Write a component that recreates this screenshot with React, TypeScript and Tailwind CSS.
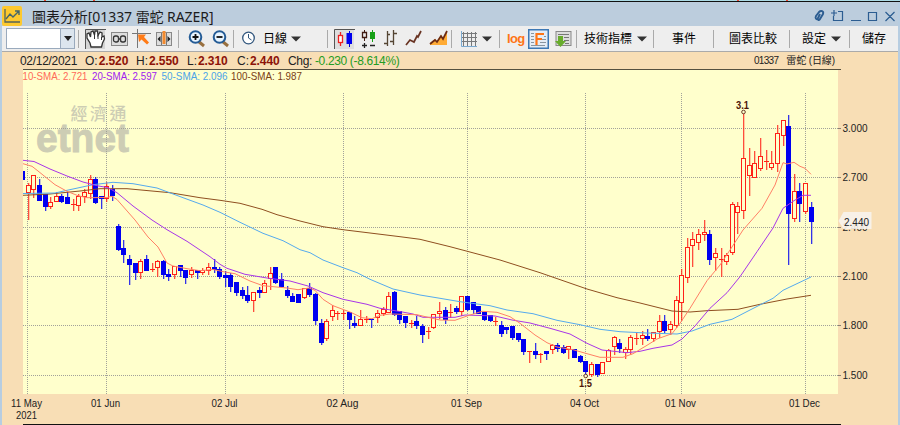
import { ReactNode } from "react";

type Candle = [
	up: 0 | 1,
	high: number,
	bodyTop: number,
	bodyBottom: number,
	low: number
];

const FIRST_X = 28;
const STEP = 5.634;

// one entry per trading day, starting 11 May
const candles: Candle[] = [
	[1, 183, 185, 192, 219],
	[1, 175, 175, 189, 197],
	[0, 179, 185, 200, 200],
	[0, 194, 194, 206, 210],
	[1, 197, 202, 206, 208],
	[1, 192, 196, 201, 201],
	[0, 194, 196, 201, 202],
	[0, 192, 197, 203, 203],
	[1, 199, 204, 204, 210],
	[1, 194, 196, 205, 210],
	[1, 189, 192, 196, 202],
	[1, 175, 179, 193, 198],
	[0, 177, 179, 202, 203],
	[0, 196, 196, 198, 208],
	[1, 182, 186, 198, 201],
	[0, 185, 189, 195, 200],
	[0, 224, 226, 249, 250],
	[0, 240, 248, 254, 262],
	[0, 255, 259, 264, 284],
	[0, 263, 263, 272, 279],
	[1, 259, 261, 272, 278],
	[0, 255, 259, 270, 270],
	[1, 263, 269, 269, 271],
	[1, 260, 261, 267, 276],
	[0, 260, 261, 274, 278],
	[0, 269, 274, 276, 280],
	[1, 266, 266, 274, 278],
	[0, 265, 265, 270, 276],
	[0, 270, 270, 277, 283],
	[1, 267, 270, 274, 277],
	[0, 270, 270, 272, 278],
	[1, 268, 270, 272, 274],
	[1, 263, 267, 270, 274],
	[0, 259, 267, 269, 272],
	[0, 267, 269, 276, 278],
	[0, 271, 275, 277, 286],
	[0, 273, 275, 286, 291],
	[0, 282, 282, 292, 295],
	[0, 287, 290, 295, 298],
	[0, 286, 295, 300, 302],
	[1, 292, 292, 300, 311],
	[0, 287, 290, 292, 297],
	[1, 280, 283, 292, 292],
	[1, 267, 273, 278, 289],
	[0, 267, 267, 282, 283],
	[0, 273, 279, 286, 286],
	[0, 286, 290, 295, 297],
	[0, 293, 296, 301, 301],
	[0, 294, 294, 302, 302],
	[1, 288, 288, 297, 298],
	[0, 283, 288, 294, 296],
	[0, 293, 294, 320, 324],
	[0, 319, 323, 342, 344],
	[1, 319, 321, 338, 340],
	[1, 305, 310, 316, 320],
	[1, 311, 313, 313, 319],
	[1, 310, 313, 313, 319],
	[0, 312, 312, 319, 328],
	[0, 316, 323, 325, 327],
	[1, 310, 319, 325, 325],
	[1, 316, 319, 319, 322],
	[0, 319, 319, 319, 327],
	[1, 310, 313, 317, 322],
	[1, 307, 309, 313, 315],
	[1, 292, 296, 312, 312],
	[0, 291, 292, 314, 315],
	[0, 311, 311, 319, 323],
	[0, 316, 316, 322, 327],
	[1, 320, 323, 323, 327],
	[0, 316, 321, 325, 328],
	[0, 324, 326, 334, 342],
	[1, 327, 331, 331, 338],
	[1, 314, 314, 327, 328],
	[1, 302, 311, 313, 318],
	[0, 307, 310, 319, 323],
	[1, 304, 312, 312, 317],
	[0, 306, 308, 311, 313],
	[1, 296, 296, 311, 315],
	[0, 296, 296, 309, 310],
	[0, 302, 302, 309, 313],
	[0, 306, 306, 313, 313],
	[0, 312, 312, 319, 320],
	[0, 315, 315, 320, 321],
	[1, 317, 321, 321, 325],
	[0, 321, 325, 333, 336],
	[0, 327, 327, 329, 333],
	[0, 326, 326, 337, 339],
	[0, 333, 333, 339, 341],
	[0, 339, 339, 351, 354],
	[1, 351, 351, 351, 362],
	[0, 343, 351, 354, 358],
	[1, 353, 354, 354, 362],
	[0, 351, 351, 353, 359],
	[1, 344, 345, 349, 353],
	[0, 343, 345, 348, 351],
	[0, 345, 347, 352, 353],
	[1, 346, 346, 349, 358],
	[0, 349, 349, 357, 357],
	[0, 355, 356, 361, 362],
	[0, 361, 361, 371, 376],
	[1, 362, 364, 374, 376],
	[0, 364, 364, 374, 376],
	[1, 362, 362, 373, 373],
	[1, 349, 350, 361, 361],
	[1, 336, 337, 346, 354],
	[0, 339, 343, 348, 352],
	[1, 347, 349, 352, 358],
	[1, 335, 337, 349, 354],
	[1, 332, 338, 338, 344],
	[1, 331, 335, 338, 344],
	[0, 329, 336, 338, 340],
	[1, 332, 332, 338, 341],
	[1, 315, 321, 331, 337],
	[0, 315, 321, 330, 332],
	[1, 321, 324, 329, 334],
	[1, 296, 300, 325, 327],
	[1, 269, 275, 302, 320],
	[1, 238, 247, 277, 282],
	[1, 232, 239, 245, 266],
	[1, 229, 234, 242, 249],
	[1, 220, 232, 234, 240],
	[0, 230, 234, 259, 264],
	[1, 248, 253, 257, 270],
	[1, 248, 259, 259, 276],
	[1, 253, 255, 261, 264],
	[1, 202, 204, 252, 254],
	[1, 202, 206, 212, 233],
	[1, 112, 158, 210, 218],
	[1, 148, 165, 175, 195],
	[1, 151, 163, 177, 177],
	[1, 138, 156, 168, 170],
	[1, 150, 161, 161, 169],
	[1, 151, 163, 167, 169],
	[1, 125, 133, 163, 171],
	[1, 120, 120, 135, 145],
	[0, 115, 126, 213, 264],
	[1, 174, 191, 218, 221],
	[0, 183, 191, 203, 221],
	[1, 183, 183, 211, 213],
	[0, 202, 207, 221, 243],
];

const averages = [
	{
		color: "#8f4f20",
		points:
			"23,195.3 50,194 80,191 100,188.7 127,188.7 170,192.7 200,197.7 220,200.3 240,203.3 262,209.3 277,214.7 300,221 323,226.7 343,229.7 370,233 400,236.7 420,239.3 450,246.7 500,260 540,272.7 587,289 617,297.7 640,303 672,311 690,312 707,310.7 738,309.3 760,304.3 787,299 800,297 811,295.3",
	},
	{
		color: "#55aaee",
		points:
			"23,193.5 55,193 67,190.3 93,184.7 113,182.3 133,183.7 157,188 183,197.7 203,205 220,212.3 240,222.3 263,233.3 283,240.7 300,249.7 310,252.7 323,260 343,267.7 357,272.7 370,279.3 393,289 420,295 440,298.3 460,301.7 490,305.7 507,310 533,313.7 557,320.3 580,324.7 600,329.3 620,331.7 647,333 677,334 692,331 710,324.3 732,319.3 750,310 773,298.3 783,290.3 811,277",
	},
	{
		color: "#a835e8",
		points:
			"23,160.3 34,161.5 50,169 67,176 83,182 97,185.7 108,187.7 117,192.7 133,206 152,220 167,229.7 187,241.3 210,256.7 220,264.3 227,268.3 245,274.3 267,278 290,281 308,286 323,292.7 343,299.3 367,304.3 380,308.3 397,311 413,314 423,317.3 455,317.3 465,315 495,316 512,320 530,323 550,328.3 570,334 587,343.3 602,350 627,352.7 640,351.3 653,348.3 672,345 682,339 695,326 710,308.3 727,292.7 740,276.7 757,251.7 773,228 783,208.3 794,200.7 803,195.3 811,195.3",
	},
	{
		color: "#ff8066",
		points:
			"23,163.7 32,166.3 38,171 55,184.7 67,191.3 78,195.7 87,197.7 107,197.5 112,196.3 117,199.5 135,220 148,237 158,247 167,263 173,266 187,268.7 200,270.7 213,269.5 225,272 235,273.7 250,281 263,285.7 287,288 298,289.7 309,288 315,290.3 323,299.3 333,305.7 350,312 362,317.7 372,318.7 380,315.3 390,314 417,314.7 428,317.3 440,320 455,320.3 467,316 482,311.3 497,312.3 510,316.7 520,323.3 535,335 547,342.7 557,347 573,349.7 587,353.7 600,357.3 623,357.3 633,353.7 647,345.3 657,339 672,333.7 680,323.3 690,308.3 707,280.7 720,265 730,250 743,230 762,208.3 775,185 783,162.7 787,164 794,162.3 800,166.3 805,168.3 811,174.3",
	},
];

const legend = [
	{ x: 22.5, width: 65, color: "#ff6a58", label: "10-SMA: 2.721" },
	{ x: 92, width: 65, color: "#a020f0", label: "20-SMA: 2.597" },
	{ x: 161.5, width: 66, color: "#4ba3e8", label: "50-SMA: 2.096" },
	{ x: 231, width: 71, color: "#7a4014", label: "100-SMA: 1.987" },
];

const months = [
	{ x: 27, width: 31, label: "11 May" },
	{ x: 106, width: 29, label: "01 Jun" },
	{ x: 225, width: 26, label: "02 Jul" },
	{ x: 343, width: 32, label: "02 Aug" },
	{ x: 467, width: 31, label: "01 Sep" },
	{ x: 585, width: 29, label: "04 Oct" },
	{ x: 681, width: 31, label: "01 Nov" },
	{ x: 805, width: 31, label: "01 Dec" },
];

const prices = [
	{ y: 128, label: "3.000" },
	{ y: 177, label: "2.700" },
	{ y: 227, label: "2.400" },
	{ y: 276, label: "2.100" },
	{ y: 325, label: "1.800" },
	{ y: 375, label: "1.500" },
];

function CandleShape({ candle, index }: Readonly<{ candle: Candle; index: number }>) {
	const [up, high, top, bottom, low] = candle;
	const x = Math.round(FIRST_X + index * STEP - 0.4);
	const color = up ? "#ff2018" : "#0000f0";

	return (
		<g>
			<rect
				x={x}
				y={high}
				width={1.3}
				height={low - high + 1}
				fill={color}
				opacity={0.8}
			/>
			{up && bottom - top > 1 ? (
				<rect
					x={x - 1.5}
					y={top + 0.5}
					width={4}
					height={bottom - top}
					fill="#ffffcc"
					stroke={color}
				/>
			) : (
				<rect x={x - 2} y={top} width={5} height={bottom - top + 1} fill={color} />
			)}
		</g>
	);
}

function Chart() {
	return (
		<svg
			width="896"
			height="356"
			viewBox="2 69 896 356"
			fontFamily='"Liberation Sans", sans-serif'
			className="block shrink-0"
		>
			<rect x="23" y="70" width="815" height="324" fill="#ffffcc" />
			<rect x="23" y="69" width="818" height="1" fill="#55503f" />

			<g fontSize="11">
				{legend.map(({ x, width, color, label }) => (
					<text
						key={label}
						x={x}
						y="80"
						fill={color}
						textLength={width}
						lengthAdjust="spacingAndGlyphs"
					>
						{label}
					</text>
				))}
			</g>

			<g fill="#cdcdb4">
				<text
					x="70.5"
					y="119.5"
					fontSize="17"
					textLength="56"
					fontWeight="500"
					fontFamily='"Noto Sans CJK TC", sans-serif'
				>
					經濟通
				</text>
				<text
					x="36"
					y="152"
					fontSize="41"
					fontWeight="bold"
					textLength="93"
					lengthAdjust="spacingAndGlyphs"
					stroke="#cdcdb4"
					strokeWidth="1"
				>
					etnet
				</text>
			</g>

			<g stroke="#a2a29a" strokeDasharray="1 1">
				{prices.map(({ y }) => (
					<path key={y} d={`M23 ${y + 0.5}H838`} />
				))}
				{months.map(({ x }) => (
					<path key={x} d={`M${x + 0.5} 93V394`} />
				))}
			</g>

			<rect x="23" y="171" width="2" height="9" fill="#0000f0" />
			{candles.map((candle, index) => (
				<CandleShape key={index} candle={candle} index={index} />
			))}

			{averages.map(({ color, points }) => (
				<polyline key={color} points={points} fill="none" stroke={color} />
			))}

			<g fill="#ffffcc" stroke="#6b3a2a">
				<circle cx="743.5" cy="112" r="1.8" />
				<circle cx="585.7" cy="376" r="1.8" />
			</g>
			<g fill="#4d1608" fontSize="10.5" fontWeight="bold">
				<text x="736" y="109" textLength="13" lengthAdjust="spacingAndGlyphs">
					3.1
				</text>
				<text x="579" y="387" textLength="13" lengthAdjust="spacingAndGlyphs">
					1.5
				</text>
			</g>

			<g fontSize="11" fill="#222">
				{prices.map(({ y, label }) => (
					<g key={y}>
						<rect x="838" y={y} width="3" height="1" fill="#8a8070" />
						<text
							x="842.5"
							y={y + 4}
							textLength="25"
							lengthAdjust="spacingAndGlyphs"
						>
							{label}
						</text>
					</g>
				))}
				<path d="M838.500 221l5-9h28v17h-28z" fill="#f7f3ed" opacity="0.9" />
				<text x="844" y="226" textLength="25" lengthAdjust="spacingAndGlyphs">
					2.440
				</text>
				{months.map(({ x, width, label }) => (
					<text
						key={x}
						x={x - width / 2 - 0.5}
						y="407"
						textLength={width}
						lengthAdjust="spacingAndGlyphs"
					>
						{label}
					</text>
				))}
				<text x="16" y="419" textLength="21" lengthAdjust="spacingAndGlyphs">
					2021
				</text>
			</g>
			<rect x="23" y="424" width="818" height="1" fill="#111" />
		</svg>
	);
}

function Separator({ className }: Readonly<{ className: string }>) {
	return <div className={`w-px h-[18px] bg-[#aaa] shrink-0 ${className}`} />;
}

function Icon({
	className,
	width,
	children,
}: Readonly<{ className: string; width: number; children: ReactNode }>) {
	return (
		<svg
			width={width}
			height="20"
			viewBox={`0 0 ${width} 20`}
			fill="none"
			className={`shrink-0 ${className}`}
		>
			{children}
		</svg>
	);
}

function Caret({ className }: Readonly<{ className: string }>) {
	return (
		<Icon className={className} width={10}>
			<path d="M0 7.500h10l-5 5z" fill="#333" />
		</Icon>
	);
}

function Label({
	className,
	children,
}: Readonly<{ className: string; children: ReactNode }>) {
	return (
		<span
			className={`shrink-0 whitespace-nowrap text-[12px] leading-5 text-black ${className}`}
		>
			{children}
		</span>
	);
}

function TitleBar() {
	return (
		<div className="h-6 shrink-0 flex items-center bg-[#bccddd]">
			<Icon className="mt-[3px]" width={20}>
				<rect width="20" height="20" rx="2" fill="#fdc92f" />
				<path d="M3 3v13h15" stroke="#55645a" strokeWidth="1.3" />
				<path d="M4 13l4-5 3 3 6-6M13 5h4v4" stroke="#44656c" strokeWidth="1.400" />
			</Icon>
			<h1 className="ml-[10px] mt-1.5 w-[190px] whitespace-nowrap text-[14px] leading-5 tracking-[-0.06px] text-[#1c1c1c] font-['Noto_Sans','Noto_Sans_CJK_TC',sans-serif]">
				圖表分析[01337 雷蛇 RAZER]
			</h1>
			<svg
				width="86"
				height="16"
				viewBox="0 0 86 16"
				fill="none"
				stroke="#2c5d91"
				strokeWidth="1.2"
				className="ml-auto mt-1"
			>
				<path
					d="M6 11c-2 1-3-1-2-3l3-4c2-2 5-1 4 2l-3 5c-1 2-3 1-2-1l2-4"
					strokeWidth="1.900"
				/>
				<path d="M26 3.500h4.500v9h-9V8M22 2v6M19 5h6" />
				<path d="M39 12.500h10M56.500 4.500h8v8h-8zM73.500 4l9 9M82.500 4l-9 9" />
			</svg>
		</div>
	);
}

function Toolbar() {
	return (
		<div className="h-[26px] shrink-0 flex items-center bg-[#eeeeee] border-b border-[#aaa] font-['Liberation_Sans','Noto_Sans_CJK_TC',sans-serif]">
			<div className="ml-[4px] w-[69px] h-[21px] shrink-0 flex bg-white border border-[#9aaabd]">
				<div className="ml-auto w-[14px] bg-[#dce5ee] border-l border-[#9aaabd] flex items-center justify-center">
					<svg width="8" height="5" viewBox="0 0 8 5">
						<path d="M0 0h8L4 5z" fill="#222" />
					</svg>
				</div>
			</div>
			<Separator className="ml-[3px]" />
			<Icon className="ml-[6px]" width={21}>
				<path d="M0 0h20v20H0z" fill="#d5d5d5" />
				<path d="M.5 20V.5H21" stroke="#555" />
				<path
					d="M6 18l-1-4-3-5 0-4 2-1 1.500 4L6 3l2-1 1.500 4L10 2h2.500l.5 4.500L15 3l2 1v4l2-1 .5 3-2 4-1 4z"
					fill="white"
					stroke="#333"
					strokeWidth="1.300"
				/>
				<path d="M9.500 6v4M13 6v4M16.500 8v3" stroke="#333" />
			</Icon>
			<Icon className="ml-[5px]" width={17}>
				<rect x=".5" y="3.500" width="16" height="13" fill="#dedede" stroke="#888" />
				<rect x="2.500" y="7" width="5" height="6" rx="2" stroke="#333" strokeWidth="1.300" />
				<rect x="9.500" y="7" width="5" height="6" rx="2" stroke="#333" strokeWidth="1.300" />
				<path d="M7 8l3 4M10 8l-3 4" stroke="#444" />
			</Icon>
			<Icon className="ml-[4px]" width={19}>
				<path d="M0 4.500h19M5.500 0v19" stroke="#777" />
				<path d="M6 5.500l8 0-2 2.500 5 5.500-2 2-5.500-5-2.500 2.500z" fill="#ff7b17" />
			</Icon>
			<Icon className="ml-[5px]" width={16}>
				<rect x=".5" y="3.500" width="15" height="13" fill="#ddd" stroke="#888" />
				<path d="M5.500 4v12M10.500 4v12" stroke="#777" />
				<path d="M4.500 7v6L1.500 10zM11.500 7v6l3-3z" fill="#222" />
				<path d="M6.500 2h3v13h-3z" fill="#f28a2e" />
			</Icon>
			<Separator className="ml-[6px]" />
			<Icon className="ml-[9px]" width={18}>
				<path d="M10 12l6 5" stroke="#99703f" strokeWidth="3" />
				<circle cx="7.500" cy="8" r="5.800" fill="#e9f5ff" stroke="#255c96" strokeWidth="2" />
				<path d="M4.500 8h6M7.500 5v6" stroke="#111" strokeWidth="1.800" />
			</Icon>
			<Icon className="ml-[6px]" width={18}>
				<path d="M10 12l6 5" stroke="#99703f" strokeWidth="3" />
				<circle cx="7.500" cy="8" r="5.800" fill="#e9f5ff" stroke="#255c96" strokeWidth="2" />
				<path d="M4.500 8h6" stroke="#111" strokeWidth="1.800" />
			</Icon>
			<Separator className="ml-[3px]" />
			<Icon className="ml-[8px]" width={14}>
				<circle cx="6.500" cy="9" r="5.800" fill="white" stroke="#31567d" strokeWidth="1.300" />
				<path d="M6.500 5v4l3 2" stroke="#31567d" />
			</Icon>
			<Label className="ml-[7px] w-6">日線</Label>
			<Caret className="ml-[4px]" />
			<Separator className="ml-[26px]" />
			<Icon className="ml-[6px]" width={21}>
				<path d="M0 0h20v20H0z" fill="#dedede" />
				<path d="M.5 20V.5H21" stroke="#555" />
				<path d="M6.500 3v14" stroke="#ee2020" strokeWidth="1.300" />
				<path d="M15.500 2v16" stroke="#0000dd" />
				<rect x="4.500" y="6.500" width="4" height="7" fill="#fff" stroke="#ee2020" strokeWidth="1.300" />
				<path d="M12.500 4h5.500v11h-5.500z" fill="#0000ee" />
			</Icon>
			<Icon className="ml-[6px]" width={17}>
				<path d="M3.500 1v11" stroke="#421c12" />
				<path d="M1.500 3.500h4v5h-4z" fill="#eee" stroke="#421c12" strokeWidth="1.300" />
				<path d="M11.500 1v12" stroke="#16a016" />
				<path d="M9 3h5v7H9z" fill="#16a016" />
				<path d="M1 16.500h5M3.500 14v5M9 16.500h5" stroke="#222" strokeWidth="1.300" />
			</Icon>
			<Icon className="ml-[5px]" width={15}>
				<path
					d="M4.500 2v15M1 14.500h4M4 5.500h3M10.500 1v15M7 12.500h3M11 4.500h3"
					stroke="#554634"
					strokeWidth="1.300"
				/>
			</Icon>
			<Icon className="ml-[7px]" width={18}>
				<path d="M1 16l4-5 4 2 3-6 1 1 3-6" stroke="#683322" strokeWidth="1.700" />
			</Icon>
			<Icon className="ml-[6px]" width={19}>
				<path d="M1 14l5-4 2 2 4-6 2 3 4-7v14H1z" fill="#ffab35" />
				<path d="M1 15l5-4 2 2 4-6 2 3 4-8" stroke="#6b2b14" strokeWidth="1.700" />
			</Icon>
			<Separator className="ml-[3px]" />
			<Icon className="ml-[9px]" width={16}>
				<path
					d="M2.500 3v14M6.500 3v14M10.500 3v14M14.500 3v14M0 4.500h16M0 8.500h16M0 12.500h16"
					stroke="#77797b"
				/>
				<path d="M.5 2v15.500H16" stroke="#7aa9d0" />
			</Icon>
			<Caret className="ml-[5px]" />
			<Separator className="ml-[7px]" />
			<span className="ml-[7px] w-5 shrink-0 text-[13px] leading-5 font-bold tracking-[-0.7px] text-[#ff7516]">
				log
			</span>
			<Icon className="ml-[1px]" width={21}>
				<rect x=".75" y=".75" width="19.500" height="18.500" fill="#e5edf6" stroke="#3d78b5" strokeWidth="1.500" />
				<path d="M3 4.500h3M3 7.500h3M3 10.500h3M3 13.500h3M3 16.500h14M16 7.500h2M14 10.500h4M12 13.500h6" stroke="#8995a0" />
				<path d="M8.500 16V5h7.500M8.500 10h5.500" stroke="#ff7516" strokeWidth="2.200" />
			</Icon>
			<Icon className="ml-[6px]" width={17}>
				<rect x="1" y="2.500" width="15" height="14" fill="#ddd" stroke="#888" />
				<path d="M3 5.500h11M9 8.500h5M9 11.500h5M10 14.500h4" stroke="#777" />
				<path d="M3 7h5v5h3l-5.500 6L0 12h3z" fill="#68ac2c" />
			</Icon>
			<Separator className="ml-[4px]" />
			<Label className="ml-[7px] w-12">技術指標</Label>
			<Caret className="ml-[5px]" />
			<Separator className="ml-[6px]" />
			<Label className="ml-[18px] w-6">事件</Label>
			<Separator className="ml-[17px]" />
			<Label className="ml-[15px] w-12">圖表比較</Label>
			<Separator className="ml-[12px]" />
			<Label className="ml-[12px] w-6">設定</Label>
			<Caret className="ml-[5px]" />
			<Separator className="ml-[8px]" />
			<Label className="ml-[12px] w-6">儲存</Label>
		</div>
	);
}

function Quote({
	className,
	name,
	value,
}: Readonly<{ className: string; name: string; value: string }>) {
	return (
		<div className={`shrink-0 flex gap-px whitespace-nowrap ${className}`}>
			<span>{name}:</span>
			<b className="tracking-[-0.1px] text-[#8c1208]">{value}</b>
		</div>
	);
}

function QuoteBar() {
	return (
		<div className="h-[17px] shrink-0 flex items-center text-[12px] leading-4 text-[#222] font-['Liberation_Sans','Noto_Sans_CJK_TC',sans-serif]">
			<div className="ml-[18px] w-[65px] shrink-0 tracking-[-0.3px]">02/12/2021</div>
			<Quote className="w-[51px]" name="O" value="2.520" />
			<Quote className="w-[51px]" name="H" value="2.550" />
			<Quote className="w-[50px]" name="L" value="2.310" />
			<Quote className="w-[51px]" name="C" value="2.440" />
			<div className="flex gap-[3px] whitespace-nowrap tracking-[-0.35px]">
				<span>Chg:</span>
				<span className="text-[#249c24]">-0.230 (-8.614%)</span>
			</div>
			<div className="ml-auto mr-[63px] flex gap-[8px] text-[10px] whitespace-nowrap">
				<span className="tracking-[-0.7px]">01337</span>
				<span className="tracking-[-0.1px]">雷蛇 (日線)</span>
			</div>
		</div>
	);
}

export default function App() {
	return (
		<div className="w-[900px] h-[425px] overflow-hidden flex flex-col bg-[#f8deb5]">
			<div className="h-0.5 shrink-0 flex bg-[#acdbe5] border-b border-[#111] pl-11">
				<i className="w-0.5 bg-[#ed4a35]" />
				<i className="ml-[47px] w-0.5 bg-[#ed4a35]" />
				<i className="ml-[642px] w-0.5 bg-[#ed4a35]" />
				<i className="ml-[47px] w-0.5 bg-[#ed4a35]" />
			</div>
			<div className="flex-1 min-h-0 flex flex-col border-x-2 border-[#b7cde1]">
				<TitleBar />
				<Toolbar />
				<QuoteBar />
				<Chart />
			</div>
		</div>
	);
}
